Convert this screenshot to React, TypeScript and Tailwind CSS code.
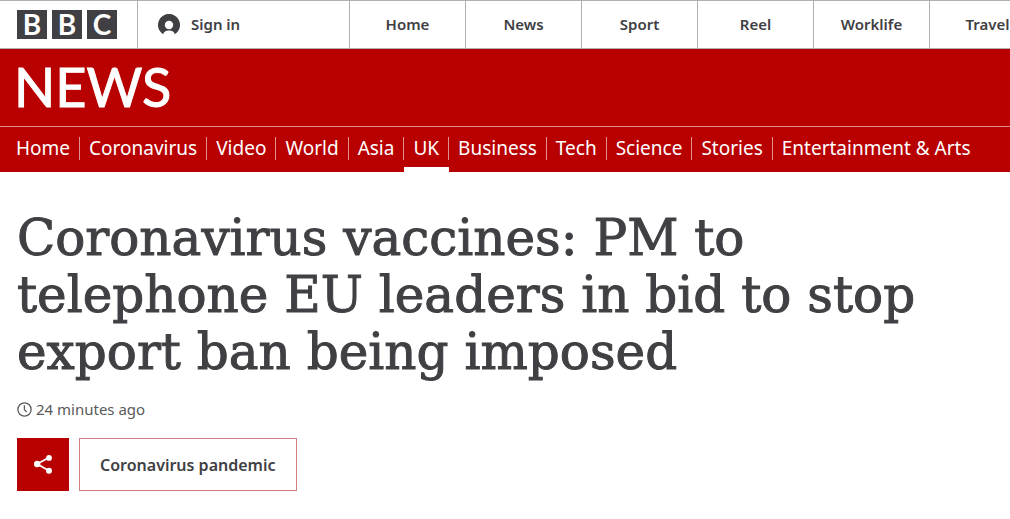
import clsx from 'clsx'

const siteLinks = ['Home', 'News', 'Sport', 'Reel', 'Worklife', 'Travel']

const sections = [
  'Home',
  'Coronavirus',
  'Video',
  'World',
  'Asia',
  'UK',
  'Business',
  'Tech',
  'Science',
  'Stories',
  'Entertainment & Arts',
]

function Logo() {
  return (
    <a href="#" aria-label="BBC" className="flex gap-[5px]">
      {['B', 'B', 'C'].map((letter, i) => (
        <span
          key={i}
          className="flex h-[29px] w-[30px] items-center justify-center bg-[#404044] pb-px font-[Lato,sans-serif] text-[28px] leading-none font-bold text-white"
        >
          {letter}
        </span>
      ))}
    </a>
  )
}

function UserIcon() {
  return (
    <svg viewBox="0 0 22 21" className="h-[21px] w-[22px]" aria-hidden="true">
      <path
        fill="#404044"
        fillRule="evenodd"
        d="M5.2 20.3A11 11 0 1 1 16.8 20.3C16.4 17.8 14.4 16.4 11 16.4C7.6 16.4 5.6 17.8 5.2 20.3ZM11 6.8a4.2 4.2 0 1 0 0 8.4a4.2 4.2 0 1 0 0-8.4Z"
      />
    </svg>
  )
}

function ClockIcon() {
  return (
    <svg
      viewBox="0 0 15 15"
      className="h-[15px] w-[15px]"
      fill="none"
      stroke="#5a5a5a"
      strokeWidth="1.3"
      aria-hidden="true"
    >
      <circle cx="7.5" cy="7.5" r="6.6" />
      <path d="M7.4 3.2V7.6L9.6 10" />
    </svg>
  )
}

function ShareIcon() {
  return (
    <svg viewBox="0 0 20 20" className="h-5 w-5" fill="white" aria-hidden="true">
      <path d="M16 2.5L4.2 9L16 15.7" fill="none" stroke="white" strokeWidth="1.8" />
      <circle cx="16" cy="2.9" r="2.9" />
      <circle cx="4.2" cy="9" r="3.2" />
      <circle cx="16" cy="15.7" r="3" />
    </svg>
  )
}

function TopBar() {
  return (
    <header className="flex h-[49px] overflow-hidden border-y border-[#b0b0b0] text-[15px] font-semibold">
      <div className="flex w-[137px] shrink-0 items-center pl-[17px]">
        <Logo />
      </div>
      <a
        href="#"
        className="flex w-[212px] shrink-0 items-center gap-[11px] border-l border-[#b0b0b0] pl-5"
      >
        <UserIcon />
        Sign in
      </a>
      <nav className="flex">
        {siteLinks.map((name) => (
          <a
            key={name}
            href="#"
            className="flex w-[116px] shrink-0 items-center justify-center border-l border-[#b0b0b0]"
          >
            {name}
          </a>
        ))}
      </nav>
    </header>
  )
}

function NewsBanner() {
  return (
    <div className="bg-[#b80000] text-white">
      <div className="flex h-[78px] items-center border-b border-[#e09090] px-[14px] pb-[2px]">
        <a
          href="#"
          className="font-[Lato,sans-serif] text-[54px] leading-none [-webkit-text-stroke:1px_white]"
        >
          NEWS
        </a>
      </div>
      <nav className="flex h-[45px] overflow-hidden pl-[7px] text-[19px] whitespace-nowrap">
        {sections.map((name, i) => (
          <a
            key={name}
            href="#"
            className={clsx(
              'border-white pt-[10px]',
              name === 'UK' && 'border-b-[5px]',
            )}
          >
            <span
              className={clsx(
                'block px-[9px] leading-[23px]',
                i < sections.length - 1 && 'border-r border-[#e09090]',
              )}
            >
              {name}
            </span>
          </a>
        ))}
      </nav>
    </div>
  )
}

export default function App() {
  return (
    <div className="bg-white font-['Noto_Sans',sans-serif] text-[#404044]">
      <TopBar />
      <NewsBanner />
      <main className="px-[17px] pt-[38px] pb-7">
        <h1 className="font-['DejaVu_Serif',serif] text-[50px] leading-[57px] [-webkit-text-stroke:1px_#404044]">
          Coronavirus vaccines: PM to telephone EU leaders in bid to stop export
          ban being imposed
        </h1>
        <p className="mt-[18px] flex items-center gap-1 text-[15px] leading-5 text-[#5a5a5a]">
          <ClockIcon />
          <time>24 minutes ago</time>
        </p>
        <div className="mt-[19px] flex gap-[10px]">
          <button
            type="button"
            aria-label="Share"
            className="flex h-[53px] w-[52px] items-center justify-center bg-[#b80000]"
          >
            <ShareIcon />
          </button>
          <a
            href="#"
            className="flex h-[53px] items-center border border-[#d08080] px-5 text-[16px] font-semibold"
          >
            Coronavirus pandemic
          </a>
        </div>
      </main>
    </div>
  )
}
